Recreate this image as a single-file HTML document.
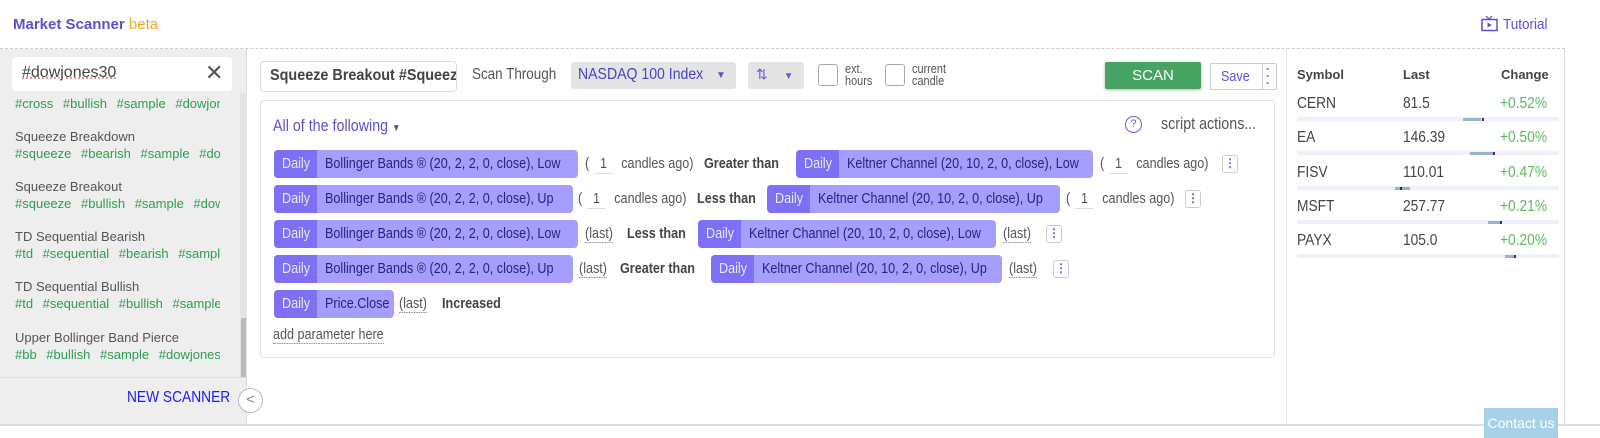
<!DOCTYPE html>
<html><head><meta charset="utf-8"><style>
*{box-sizing:border-box;margin:0;padding:0}
body{width:1600px;height:438px;background:#fff;font-family:"Liberation Sans",sans-serif;position:relative;overflow:hidden;color:#444}
.a{position:absolute;white-space:nowrap}
.sx{display:inline-block;transform:scaleX(.84);transform-origin:0 50%}
.chip{position:absolute;height:28px;border-radius:4px;background:#a59efc;overflow:hidden;font-size:15px;line-height:28px;color:#2b2280;white-space:nowrap}
.chip b{font-weight:normal;display:inline-block;background:#7d70f5;color:#e8e6ff;padding:0 0 0 8px;width:43px;height:28px;vertical-align:top;overflow:hidden}
.chip b i{font-style:normal;display:inline-block;transform:scaleX(.84);transform-origin:0 50%}
.chip span{display:inline-block;margin-left:8px;transform:scaleX(.84);transform-origin:0 50%}
.t{position:absolute;font-size:15px;color:#555;white-space:nowrap;line-height:18px;transform:scaleX(.84);transform-origin:0 50%}
.bold{font-weight:bold;color:#444}
.u{border-bottom:1px dotted #777}
.one{display:inline-block;width:22px;text-align:center;border-bottom:1px solid #ddd;margin:0 6px}
.dots{position:absolute;width:16px;height:18px;border:1px solid #ccc;border-radius:3px;color:#6a5be0;font-size:12px;line-height:15px;text-align:center;font-weight:bold}
.side .ti{position:absolute;left:15px;font-size:13px;color:#555;white-space:nowrap}
.side .tg{position:absolute;left:15px;font-size:13px;color:#2e9e4f;white-space:nowrap;word-spacing:6px;width:205px;overflow:hidden}
.rt{position:absolute;font-size:14px;color:#444}
.rn{position:absolute;font-size:16px;color:#444;transform:scaleX(.86);transform-origin:0 50%}
.bar{position:absolute;left:1297px;width:262px;height:4px;background:#eef0fa}
</style></head><body>
<div class="a" style="left:13px;top:16px;font-size:15px;font-weight:bold;color:#5a52c9">Market Scanner <span style="font-weight:normal;color:#f5a623">beta</span></div>
<svg class="a" style="left:1481px;top:15px" width="18" height="17" viewBox="0 0 18 17"><path d="M5 1l3 3 3-3" fill="none" stroke="#5a52c9" stroke-width="1.2"/><rect x="1" y="4.5" width="15" height="11" fill="none" stroke="#5a52c9" stroke-width="1.5"/><path d="M6.5 7.5v5l4.5-2.5z" fill="#5a52c9"/></svg>
<div class="a" style="left:1503px;top:16px;font-size:15px;color:#5a52c9"><span class="sx" style="transform:scaleX(.9)">Tutorial</span></div>
<div class="a" style="left:0;top:48px;width:1565px;border-top:1px dashed #ccc"></div>
<div class="a" style="left:1286px;top:49px;height:376px;border-left:1px solid #e5e5e5"></div>
<div class="a" style="left:1564px;top:49px;height:376px;border-left:1px solid #ddd"></div>
<div class="a" style="left:0;top:424px;width:1600px;border-top:2px solid #ddd"></div>

<div class="side a" style="left:0;top:49px;width:247px;height:375px;background:#eee;border-right:1px solid #ddd">
 <div class="a" style="left:12px;top:8px;width:220px;height:34px;background:#fff;border-radius:4px"></div>
 <div class="a" style="left:22px;top:15px;font-size:16px;color:#444;text-decoration:underline dotted #e57373">#dowjones30</div>
 <div class="a" style="left:205px;top:11px;font-size:22px;color:#555;font-weight:lighter">✕</div>
 <div class="a" style="left:0;top:44px;width:247px;height:285px;overflow:hidden">
  <div class="tg" style="top:3px">#cross #bullish #sample #dowjones30</div>
  <div class="ti" style="top:36px">Squeeze Breakdown</div><div class="tg" style="top:53px">#squeeze #bearish #sample #dowjones</div>
  <div class="ti" style="top:86px">Squeeze Breakout</div><div class="tg" style="top:103px">#squeeze #bullish #sample #dowjones</div>
  <div class="ti" style="top:136px">TD Sequential Bearish</div><div class="tg" style="top:153px">#td #sequential #bearish #sample</div>
  <div class="ti" style="top:186px">TD Sequential Bullish</div><div class="tg" style="top:203px">#td #sequential #bullish #sample</div>
  <div class="ti" style="top:237px">Upper Bollinger Band Pierce</div><div class="tg" style="top:254px">#bb #bullish #sample #dowjones30</div>
  <div class="a" style="left:240px;top:0;width:7px;height:285px;background:#e4e4e4"></div>
  <div class="a" style="left:241px;top:225px;width:5px;height:60px;background:#bbb"></div>
 </div>
 <div class="a" style="left:0;top:328px;width:247px;border-top:1px solid #ddd"></div>
 <div class="a" style="left:127px;top:340px;font-size:16px;color:#1a1aff"><span class="sx" style="transform:scaleX(.86)">NEW SCANNER</span></div>
</div>
<div class="a" style="left:238px;top:388px;width:25px;height:25px;border-radius:50%;border:1px solid #bbb;background:#fff;text-align:center;line-height:22px;color:#888;font-size:15px">&lt;</div>

<div class="a" style="left:260px;top:61px;width:197px;height:31px;border:1px solid #ddd;border-radius:4px;overflow:hidden;padding:5px 9px;font-size:16px;font-weight:bold;color:#444"><span class="sx" style="transform:scaleX(.9)">Squeeze Breakout #Squeeze</span></div>
<div class="t" style="left:472px;top:66px;font-size:16px">Scan Through</div>
<div class="a" style="left:571px;top:62px;width:165px;height:27px;background:#e4e4e4;border-radius:3px;padding:4px 7px;font-size:16px;color:#4b42c4"><span class="sx" style="transform:scaleX(.88)">NASDAQ 100 Index</span></div>
<div class="a" style="left:716px;top:70px;font-size:10px;color:#5a52c9">▼</div>
<div class="a" style="left:748px;top:62px;width:56px;height:27px;background:#e4e4e4;border-radius:3px;padding:4px 8px;font-size:14px;color:#6a5be0">⇅ <span style="font-size:10px;margin-left:12px">▼</span></div>
<div class="a" style="left:818px;top:64px;width:20px;height:22px;border:1px solid #aaa;border-radius:3px;background:#fff"></div>
<div class="a" style="left:845px;top:63px;font-size:13px;line-height:12px;color:#555"><span class="sx">ext.<br>hours</span></div>
<div class="a" style="left:885px;top:64px;width:20px;height:22px;border:1px solid #aaa;border-radius:3px;background:#fff"></div>
<div class="a" style="left:912px;top:63px;font-size:13px;line-height:12px;color:#555"><span class="sx">current<br>candle</span></div>
<div class="a" style="left:1105px;top:62px;width:96px;height:27px;background:#46a463;border-radius:2px;color:#fff;text-align:center;line-height:27px;font-size:15px;box-shadow:0 1px 3px rgba(0,0,0,.3)">SCAN</div>
<div class="a" style="left:1210px;top:63px;width:67px;height:27px;border:1px solid #ccc;border-radius:2px;color:#5a52c9;font-size:15px;line-height:25px;padding-left:10px"><span class="sx">Save</span></div>
<div class="a" style="left:1262px;top:64px;height:25px;border-left:1px solid #ccc"></div>
<div class="a" style="left:1266px;top:66px;color:#6a5be0;font-weight:bold;font-size:12px;line-height:7px">·<br>·<br>·</div>

<div class="a" style="left:260px;top:100px;width:1015px;height:258px;border:1px solid #e2e2e2;border-radius:4px"></div>
<div class="t" style="left:273px;top:117px;font-size:17px;color:#5a52c9">All of the following <span style="font-size:10px;color:#555">▼</span></div>
<div class="a" style="left:1125px;top:116px;width:17px;height:17px;border:1.5px solid #6a5be0;border-radius:50%;color:#6a5be0;font-size:11px;text-align:center;line-height:14px">?</div>
<div class="t" style="left:1161px;top:115px;font-size:17px">script actions...</div>

<div class="chip" style="left:274px;top:150px;width:304px"><b><i>Daily</i></b><span>Bollinger Bands ® (20, 2, 2, 0, close), Low</span></div>
<div class="t" style="left:585px;top:155px">(<span class="one">1</span> candles ago)</div>
<div class="t bold" style="left:704px;top:155px">Greater than</div>
<div class="chip" style="left:796px;top:150px;width:297px"><b><i>Daily</i></b><span>Keltner Channel (20, 10, 2, 0, close), Low</span></div>
<div class="t" style="left:1100px;top:155px">(<span class="one">1</span> candles ago)</div>
<div class="dots" style="left:1222px;top:155px">⋮</div>

<div class="chip" style="left:274px;top:185px;width:299px"><b><i>Daily</i></b><span>Bollinger Bands ® (20, 2, 2, 0, close), Up</span></div>
<div class="t" style="left:578px;top:190px">(<span class="one">1</span> candles ago)</div>
<div class="t bold" style="left:697px;top:190px">Less than</div>
<div class="chip" style="left:767px;top:185px;width:293px"><b><i>Daily</i></b><span>Keltner Channel (20, 10, 2, 0, close), Up</span></div>
<div class="t" style="left:1066px;top:190px">(<span class="one">1</span> candles ago)</div>
<div class="dots" style="left:1185px;top:190px">⋮</div>

<div class="chip" style="left:274px;top:220px;width:304px"><b><i>Daily</i></b><span>Bollinger Bands ® (20, 2, 2, 0, close), Low</span></div>
<div class="t" style="left:585px;top:225px"><span class="u">(last)</span></div>
<div class="t bold" style="left:627px;top:225px">Less than</div>
<div class="chip" style="left:698px;top:220px;width:298px"><b><i>Daily</i></b><span>Keltner Channel (20, 10, 2, 0, close), Low</span></div>
<div class="t" style="left:1003px;top:225px"><span class="u">(last)</span></div>
<div class="dots" style="left:1046px;top:225px">⋮</div>

<div class="chip" style="left:274px;top:255px;width:299px"><b><i>Daily</i></b><span>Bollinger Bands ® (20, 2, 2, 0, close), Up</span></div>
<div class="t" style="left:579px;top:260px"><span class="u">(last)</span></div>
<div class="t bold" style="left:620px;top:260px">Greater than</div>
<div class="chip" style="left:711px;top:255px;width:291px"><b><i>Daily</i></b><span>Keltner Channel (20, 10, 2, 0, close), Up</span></div>
<div class="t" style="left:1009px;top:260px"><span class="u">(last)</span></div>
<div class="dots" style="left:1053px;top:260px">⋮</div>

<div class="chip" style="left:274px;top:290px;width:120px"><b><i>Daily</i></b><span>Price.Close</span></div>
<div class="t" style="left:399px;top:295px"><span class="u">(last)</span></div>
<div class="t bold" style="left:442px;top:295px">Increased</div>
<div class="t" style="left:273px;top:326px"><span class="u">add parameter here</span></div>

<div class="rt" style="left:1297px;top:67px;font-weight:bold;font-size:13px">Symbol</div>
<div class="rt" style="left:1403px;top:67px;font-weight:bold;font-size:13px">Last</div>
<div class="rt" style="left:1501px;top:67px;font-weight:bold;font-size:13px">Change</div>

<div class="rn" style="left:1297px;top:95px">CERN</div><div class="rn" style="left:1403px;top:95px">81.5</div><div class="rn" style="left:1500px;top:95px;color:#5cb85c">+0.52%</div>
<div class="bar" style="top:117px"></div><div class="a" style="left:1463px;top:118px;width:18px;height:3px;background:#9bb0cc"></div><div class="a" style="left:1482px;top:118px;width:2px;height:3px;background:#334"></div>
<div class="rn" style="left:1297px;top:129px">EA</div><div class="rn" style="left:1403px;top:129px">146.39</div><div class="rn" style="left:1500px;top:129px;color:#5cb85c">+0.50%</div>
<div class="bar" style="top:151px"></div><div class="a" style="left:1470px;top:152px;width:23px;height:3px;background:#9bb0cc"></div><div class="a" style="left:1493px;top:152px;width:2px;height:3px;background:#334"></div>
<div class="rn" style="left:1297px;top:164px">FISV</div><div class="rn" style="left:1403px;top:164px">110.01</div><div class="rn" style="left:1500px;top:164px;color:#5cb85c">+0.47%</div>
<div class="bar" style="top:186px"></div><div class="a" style="left:1395px;top:187px;width:15px;height:3px;background:#9bb0cc"></div><div class="a" style="left:1400px;top:187px;width:2px;height:3px;background:#334"></div>
<div class="rn" style="left:1297px;top:198px">MSFT</div><div class="rn" style="left:1403px;top:198px">257.77</div><div class="rn" style="left:1500px;top:198px;color:#5cb85c">+0.21%</div>
<div class="bar" style="top:220px"></div><div class="a" style="left:1488px;top:221px;width:12px;height:3px;background:#9bb0cc"></div><div class="a" style="left:1500px;top:221px;width:2px;height:3px;background:#334"></div>
<div class="rn" style="left:1297px;top:232px">PAYX</div><div class="rn" style="left:1403px;top:232px">105.0</div><div class="rn" style="left:1500px;top:232px;color:#5cb85c">+0.20%</div>
<div class="bar" style="top:254px"></div><div class="a" style="left:1505px;top:255px;width:10px;height:3px;background:#9bb0cc"></div><div class="a" style="left:1514px;top:255px;width:2px;height:3px;background:#334"></div>

<div class="a" style="left:1484px;top:408px;width:74px;height:30px;background:#a8d0e6;color:#fff;font-size:14px;text-align:center;line-height:30px">Contact us</div>
</body></html>
